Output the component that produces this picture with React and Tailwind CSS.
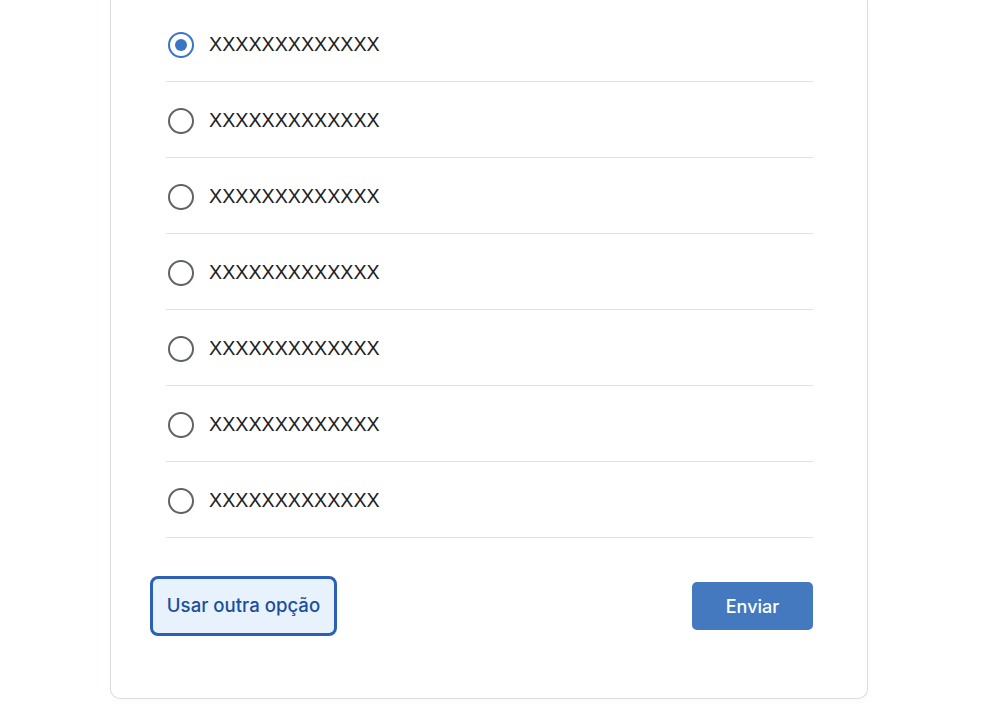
import React from "react";

const items = Array.from({ length: 7 }, () => "XXXXXXXXXXXXX");

function Radio({ checked }) {
  return checked ? (
    <span className="flex h-[26px] w-[26px] items-center justify-center rounded-full border-[2.5px] border-[#3b73c6]">
      <span className="h-[12px] w-[12px] rounded-full bg-[#3b73c6]" />
    </span>
  ) : (
    <span className="h-[26px] w-[26px] rounded-full border-[2.5px] border-[#5f6368]" />
  );
}

export default function App() {
  return (
    <div className="min-h-[710px] bg-white" style={{ fontFamily: "Inter, 'Liberation Sans', sans-serif" }}>
      <div className="ml-[110px] w-[758px] rounded-b-[10px] border border-t-0 border-[#dadce0] bg-white pl-[55px] pr-[54px] pt-[6px] pb-[62px] shadow-[0_4px_6px_rgba(0,0,0,0.02)]">
        <div className="flex flex-col">
          {items.map((t, i) => (
            <div key={i} className="flex h-[76px] items-center border-b border-[#dfe1e5] pl-[2px] pt-[2px]">
              <Radio checked={i === 0} />
              <span
                className="ml-[15px] mt-[1px] text-[19.7px] text-[#202124]"
                style={{ fontFamily: "'Liberation Sans', Arial, sans-serif" }}
              >
                {t}
              </span>
            </div>
          ))}
        </div>
        <div className="mt-[38px] flex items-center justify-between">
          <button className="-ml-[16px] flex h-[60px] w-[187px] items-center justify-center rounded-[8px] border-[3px] border-[#2c60b6] bg-[#e8f2fc] text-[18.6px] font-medium text-[#1c4e9e]">
            Usar outra opção
          </button>
          <button className="flex h-[48px] w-[121px] items-center justify-center rounded-[5px] bg-[#4479c0] text-[18px] font-medium text-white">
            Enviar
          </button>
        </div>
      </div>
    </div>
  );
}
